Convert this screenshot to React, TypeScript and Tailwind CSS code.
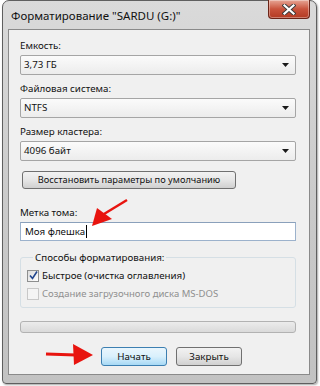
const bodyFont = { fontFamily: '"Noto Sans", "Open Sans", sans-serif' };

function DropArrow() {
  return (
    <svg width="7" height="4" viewBox="0 0 7 4" className="mr-[6px]">
      <path d="M0 0h7L3.5 4z" fill="#1a1a1a" />
    </svg>
  );
}

function Select({ value }: { value: string }) {
  return (
    <div className="flex h-[20px] w-[276px] items-center justify-between rounded-[2px] border border-[#a5a5a5] bg-gradient-to-b from-[#fbfbfb] to-[#ececec] pl-[3px] text-[9.75px] leading-[14px] text-[#111]">
      <span>{value}</span>
      <DropArrow />
    </div>
  );
}

function Label({ text }: { text: string }) {
  return <div className="mb-[2px] h-[15px] text-[9.75px] leading-[15px] text-[#111]">{text}</div>;
}

function Checkbox({ checked, disabled }: { checked?: boolean; disabled?: boolean }) {
  return (
    <div
      className={
        disabled
          ? "flex h-[12px] w-[12px] shrink-0 items-center justify-center border border-[#c8c8c8] bg-[#f4f4f4]"
          : "flex h-[12px] w-[12px] shrink-0 items-center justify-center border border-[#8e8f8f] bg-gradient-to-br from-[#dcdcdc] to-[#ffffff]"
      }
    >
      {checked && (
        <svg width="9" height="9" viewBox="0 0 9 9">
          <path d="M1 4.5 L3.5 7.5 L8 0.5" fill="none" stroke="#21468e" strokeWidth="1.6" />
        </svg>
      )}
    </div>
  );
}

export default function App() {
  return (
    <div className="relative h-[386px] w-[320px] overflow-hidden bg-white" style={bodyFont}>
      <div className="ml-[2px] flex h-[384px] w-[315px] flex-col rounded-t-[7px] rounded-b-[4px] border border-[#5f5f5f] bg-gradient-to-b from-[#dadada] via-[#cbcbcb] to-[#c2c2c2] shadow-[1px_1px_2px_rgba(0,0,0,0.35)]">
        {/* title bar */}
        <div className="flex h-[28px] shrink-0 items-start justify-between pl-[8px] pr-[6px]">
          <div className="mt-[7px] text-[11.5px] leading-[15px] text-[#111]">Форматирование "SARDU (G:)"</div>
          <div className="-mt-px flex h-[19px] w-[42px] items-center justify-center rounded-b-[4px] border border-t-0 border-[#6b2417] bg-gradient-to-b from-[#e6a595] via-[#c9533c] to-[#b33a22] shadow-[inset_0_0_0_1px_rgba(255,255,255,0.35)]">
            <svg width="14" height="11" viewBox="0 0 14 11">
              <path d="M2.5 1.5 L11.5 9.5 M11.5 1.5 L2.5 9.5" stroke="#3a3a3a" strokeWidth="4" strokeLinecap="square" />
              <path d="M2.5 1.5 L11.5 9.5 M11.5 1.5 L2.5 9.5" stroke="#ffffff" strokeWidth="2.2" strokeLinecap="square" />
            </svg>
          </div>
        </div>

        {/* client area */}
        <div className="mx-[5px] mr-[6px] mb-[8px] flex h-[346px] flex-col items-start border border-[#8a8a8a] bg-[#f0f0f0] pl-[11px] pt-[8px]">
          <Label text="Емкость:" />
          <Select value="3,73 ГБ" />

          <div className="mt-[6px]">
            <Label text="Файловая система:" />
            <Select value="NTFS" />
          </div>

          <div className="mt-[6px]">
            <Label text="Размер кластера:" />
            <Select value="4096 байт" />
          </div>

          <button className="mt-[10px] ml-[2px] flex h-[18px] w-[214px] items-center justify-center whitespace-nowrap rounded-[3px] border border-[#707070] bg-gradient-to-b from-[#f2f2f2] via-[#e6e6e6] to-[#d0d0d0] text-[9.25px] leading-[14px] text-[#111]">
            Восстановить параметры по умолчанию
          </button>

          <div className="mt-[16px]">
            <Label text="Метка тома:" />
            <div className="flex h-[19px] w-[276px] items-center border border-[#9cb2cc] border-t-[#8aa0bb] bg-white pl-[4px] text-[9.75px] leading-[14px] text-[#111]">
              Моя флешка<span className="ml-px inline-block h-[13px] w-px bg-black" />
            </div>
          </div>

          <fieldset className="mt-[9px] w-[276px] rounded-[3px] border border-[#d5dfe5] pb-[6px] pl-[6px]">
            <legend className="ml-[6px] px-[2px] text-[9.75px] leading-[15px] text-[#111]">Способы форматирования:</legend>
            <div className="mt-[3px] flex h-[15px] items-center gap-[3px] text-[9.75px] leading-[15px] text-[#111]">
              <Checkbox checked />
              <span>Быстрое (очистка оглавления)</span>
            </div>
            <div className="mt-[3px] flex h-[15px] items-center gap-[3px] text-[9.5px] leading-[15px] text-[#8f8f8f]">
              <Checkbox disabled />
              <span>Создание загрузочного диска MS-DOS</span>
            </div>
          </fieldset>

          <div className="mt-[13px] h-[12px] w-[276px] rounded-[3px] border border-[#b2b2b2] bg-gradient-to-b from-[#ececec] to-[#dadada]" />

          <div className="mt-[14px] ml-[81px] flex gap-[9px]">
            <button className="flex h-[19px] w-[66px] items-center justify-center rounded-[3px] border border-[#3c7fb1] bg-gradient-to-b from-[#eaf6fd] via-[#d9f0fc] to-[#a7d9f5] text-[9.75px] leading-[14px] text-[#111]">
              Начать
            </button>
            <button className="flex h-[19px] w-[66px] items-center justify-center rounded-[3px] border border-[#707070] bg-gradient-to-b from-[#f2f2f2] via-[#e6e6e6] to-[#d0d0d0] text-[9.75px] leading-[14px] text-[#111]">
              Закрыть
            </button>
          </div>
        </div>
      </div>

      {/* red annotation arrows */}
      <svg className="pointer-events-none absolute left-0 top-0" width="320" height="386" viewBox="0 0 320 386">
        <path d="M127 200 L104 214" stroke="#e8140f" strokeWidth="2.5" />
        <path d="M92 226 L97 208 L112 219 Z" fill="#e8140f" />
        <path d="M46 354 L76 355" stroke="#e8140f" strokeWidth="3" />
        <path d="M93 355 L73 344 L74 365 Z" fill="#e8140f" />
      </svg>
    </div>
  );
}
